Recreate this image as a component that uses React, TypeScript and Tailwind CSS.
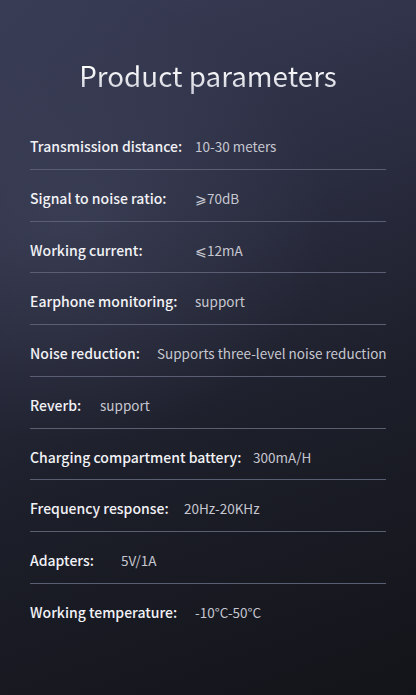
import React from 'react';

const rows = [
  { label: 'Transmission distance:', value: '10-30 meters', w: 'w-[165px]' },
  { label: 'Signal to noise ratio:', value: '⩾70dB', w: 'w-[165px]' },
  { label: 'Working current:', value: '⩽12mA', w: 'w-[165px]' },
  { label: 'Earphone monitoring:', value: 'support', w: 'w-[165px]' },
  { label: 'Noise reduction:', value: 'Supports three-level noise reduction', w: 'w-[127px]' },
  { label: 'Reverb:', value: 'support', w: 'w-[70px]' },
  { label: 'Charging compartment battery:', value: '300mA/H', w: 'w-[223px]' },
  { label: 'Frequency response:', value: '20Hz-20KHz', w: 'w-[154px]' },
  { label: 'Adapters:', value: '5V/1A', w: 'w-[91px]' },
  { label: 'Working temperature:', value: '-10°C-50°C', w: 'w-[165px]' },
];

export default function App() {
  return (
    <div className="relative w-[416px] h-[695px] overflow-hidden bg-[linear-gradient(160deg,#383c55_0%,#2c2f43_30%,#1c1e29_62%,#131419_100%)] font-['Noto_Sans_CJK_SC','Noto_Sans',sans-serif]">
      <div className="absolute inset-0 bg-[radial-gradient(ellipse_260px_220px_at_70px_220px,rgba(80,85,110,0.35),transparent)]" />
      <div className="relative px-[30px] pt-[56px]">
        <h1 className="mb-[24px] text-center text-[27.8px] leading-[38px] font-normal text-transparent bg-clip-text bg-[linear-gradient(180deg,#ffffff_30%,#c9cad6_100%)]">
          Product parameters
        </h1>
        <div>
          {rows.map((r, i) => (
            <div
              key={r.label}
              className={
                i === rows.length - 1
                  ? 'flex items-center pt-[18px] pb-[12.75px] leading-[20px] whitespace-nowrap'
                  : 'flex items-center pt-[18px] pb-[12.75px] leading-[20px] whitespace-nowrap border-b border-[#5a5e73]'
              }
            >
              <span className={`${r.w} shrink-0 text-[14px] font-medium text-[#f2f2f6]`}>{r.label}</span>
              <span className="text-[13.5px] font-normal text-[#c6c7d0]">{r.value}</span>
            </div>
          ))}
        </div>
      </div>
    </div>
  );
}
